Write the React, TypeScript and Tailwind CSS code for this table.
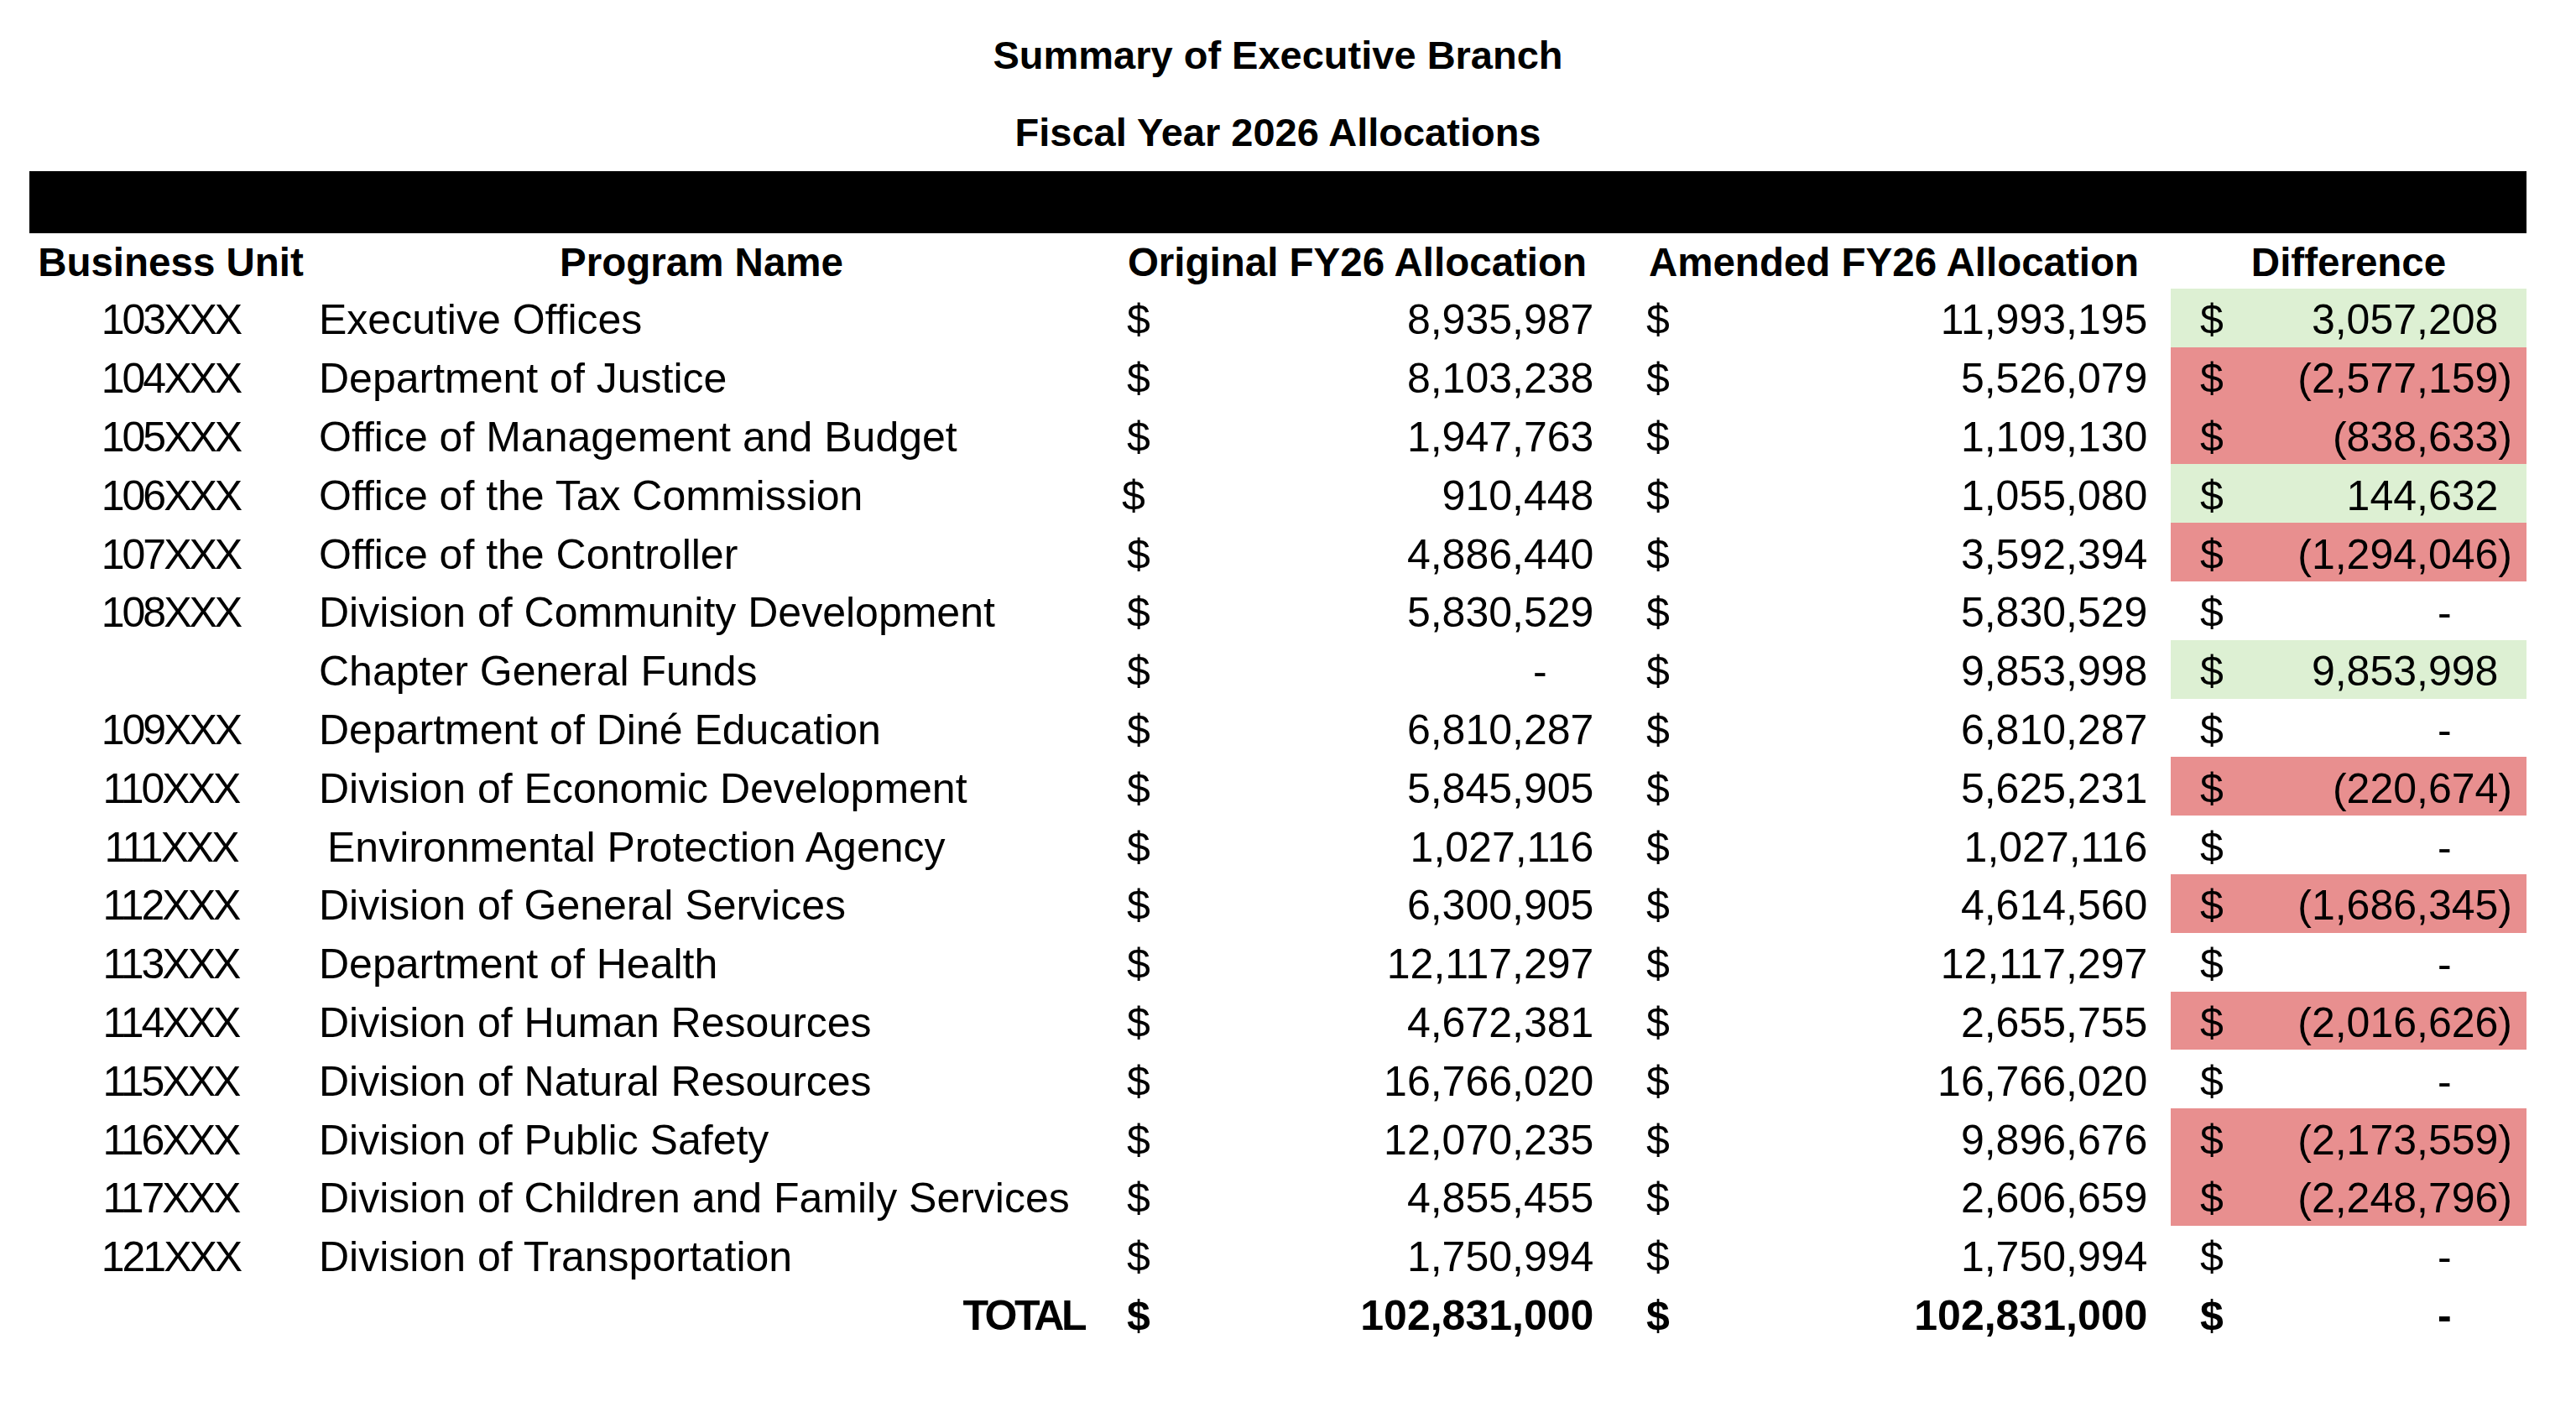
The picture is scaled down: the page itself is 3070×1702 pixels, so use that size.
import React from "react";

type Row = {
  code: string;
  name: string;
  orig: string;
  amend: string;
  diff: string;
  tone: "green" | "red" | "none";
  namePad?: string;
  origShift?: boolean;
};

const rows: Row[] = [
  { code: "103XXX", name: "Executive Offices", orig: "8,935,987", amend: "11,993,195", diff: "3,057,208", tone: "green" },
  { code: "104XXX", name: "Department of Justice", orig: "8,103,238", amend: "5,526,079", diff: "(2,577,159)", tone: "red" },
  { code: "105XXX", name: "Office of Management and Budget", orig: "1,947,763", amend: "1,109,130", diff: "(838,633)", tone: "red" },
  { code: "106XXX", name: "Office of the Tax Commission", orig: "910,448", amend: "1,055,080", diff: "144,632", tone: "green", origShift: true },
  { code: "107XXX", name: "Office of the Controller", orig: "4,886,440", amend: "3,592,394", diff: "(1,294,046)", tone: "red" },
  { code: "108XXX", name: "Division of Community Development", orig: "5,830,529", amend: "5,830,529", diff: "-", tone: "none" },
  { code: "", name: "Chapter General Funds", orig: "-", amend: "9,853,998", diff: "9,853,998", tone: "green" },
  { code: "109XXX", name: "Department of Diné Education", orig: "6,810,287", amend: "6,810,287", diff: "-", tone: "none" },
  { code: "110XXX", name: "Division of Economic Development", orig: "5,845,905", amend: "5,625,231", diff: "(220,674)", tone: "red" },
  { code: "111XXX", name: "Environmental Protection Agency", orig: "1,027,116", amend: "1,027,116", diff: "-", tone: "none", namePad: "pl-[18px]" },
  { code: "112XXX", name: "Division of General Services", orig: "6,300,905", amend: "4,614,560", diff: "(1,686,345)", tone: "red" },
  { code: "113XXX", name: "Department of Health", orig: "12,117,297", amend: "12,117,297", diff: "-", tone: "none" },
  { code: "114XXX", name: "Division of Human Resources", orig: "4,672,381", amend: "2,655,755", diff: "(2,016,626)", tone: "red" },
  { code: "115XXX", name: "Division of Natural Resources", orig: "16,766,020", amend: "16,766,020", diff: "-", tone: "none" },
  { code: "116XXX", name: "Division of Public Safety", orig: "12,070,235", amend: "9,896,676", diff: "(2,173,559)", tone: "red" },
  { code: "117XXX", name: "Division of Children and Family Services", orig: "4,855,455", amend: "2,606,659", diff: "(2,248,796)", tone: "red" },
  { code: "121XXX", name: "Division of Transportation", orig: "1,750,994", amend: "1,750,994", diff: "-", tone: "none" },
];

function Amount({ value }: { value: string }) {
  if (value === "-") {
    return (
      <span className="whitespace-pre">
        -<span className="invisible">00)</span>
      </span>
    );
  }
  if (value.startsWith("(")) {
    return <span className="whitespace-pre">{value}</span>;
  }
  return (
    <span className="whitespace-pre">
      {value}
      <span className="invisible">)</span>
    </span>
  );
}

function Money({
  value,
  pr,
  pl = "pl-[35px]",
  bg = "",
}: {
  value: string;
  pr: string;
  pl?: string;
  bg?: string;
}) {
  return (
    <div className={`flex items-center justify-between pt-[6px] ${pl} ${pr} ${bg}`}>
      <span>$</span>
      <Amount value={value} />
    </div>
  );
}

export default function App() {
  return (
    <div className="w-[3070px] h-[1702px] bg-white text-black font-['Liberation_Sans',Arial,sans-serif] overflow-hidden">
      <div className="ml-[35px] w-[2976px] pt-[20px]">
        <div className="h-[92px] flex items-center justify-center font-bold text-[47px] leading-[54px]">
          Summary of Executive Branch
        </div>
        <div className="h-[92px] flex items-center justify-center font-bold text-[47px] leading-[54px]">
          Fiscal Year 2026 Allocations
        </div>
        <div className="h-[74px] bg-black" />
        <div className="grid grid-cols-[337px_936px_619px_660px_424px] h-[66px] font-bold text-[47.5px] leading-[54px]">
          <div className="flex items-center justify-center pt-[4px] whitespace-nowrap">Business Unit</div>
          <div className="flex items-center justify-center pt-[4px] pr-[8px] whitespace-nowrap">Program Name</div>
          <div className="flex items-center justify-center pt-[4px] whitespace-nowrap">Original FY26 Allocation</div>
          <div className="flex items-center justify-center pt-[4px] whitespace-nowrap">Amended FY26 Allocation</div>
          <div className="flex items-center justify-center pt-[4px] whitespace-nowrap">Difference</div>
        </div>
        <div className="text-[50px] leading-[57px]">
          {rows.map((r, i) => (
            <div key={i} className="grid grid-cols-[337px_936px_619px_660px_424px] h-[69.8px]">
              <div className="flex items-center justify-center pt-[6px] tracking-[-3px]">{r.code}</div>
              <div className={`flex items-center pt-[6px] whitespace-nowrap ${r.namePad ?? "pl-[8px]"}`}>{r.name}</div>
              <Money value={r.orig} pr="pr-[11px]" pl={r.origShift ? "pl-[29px]" : "pl-[35px]"} />
              <Money value={r.amend} pr="pr-[11px]" />
              <Money
                value={r.diff}
                pr="pr-[17px]"
                bg={r.tone === "green" ? "bg-[#DDF0D3]" : r.tone === "red" ? "bg-[#E88F8F]" : ""}
              />
            </div>
          ))}
          <div className="grid grid-cols-[337px_936px_619px_660px_424px] h-[69.8px] font-bold">
            <div />
            <div className="flex items-center justify-end pt-[6px] pr-[16px] tracking-[-3.5px]">TOTAL</div>
            <Money value="102,831,000" pr="pr-[11px]" />
            <Money value="102,831,000" pr="pr-[11px]" />
            <Money value="-" pr="pr-[17px]" />
          </div>
        </div>
      </div>
    </div>
  );
}
